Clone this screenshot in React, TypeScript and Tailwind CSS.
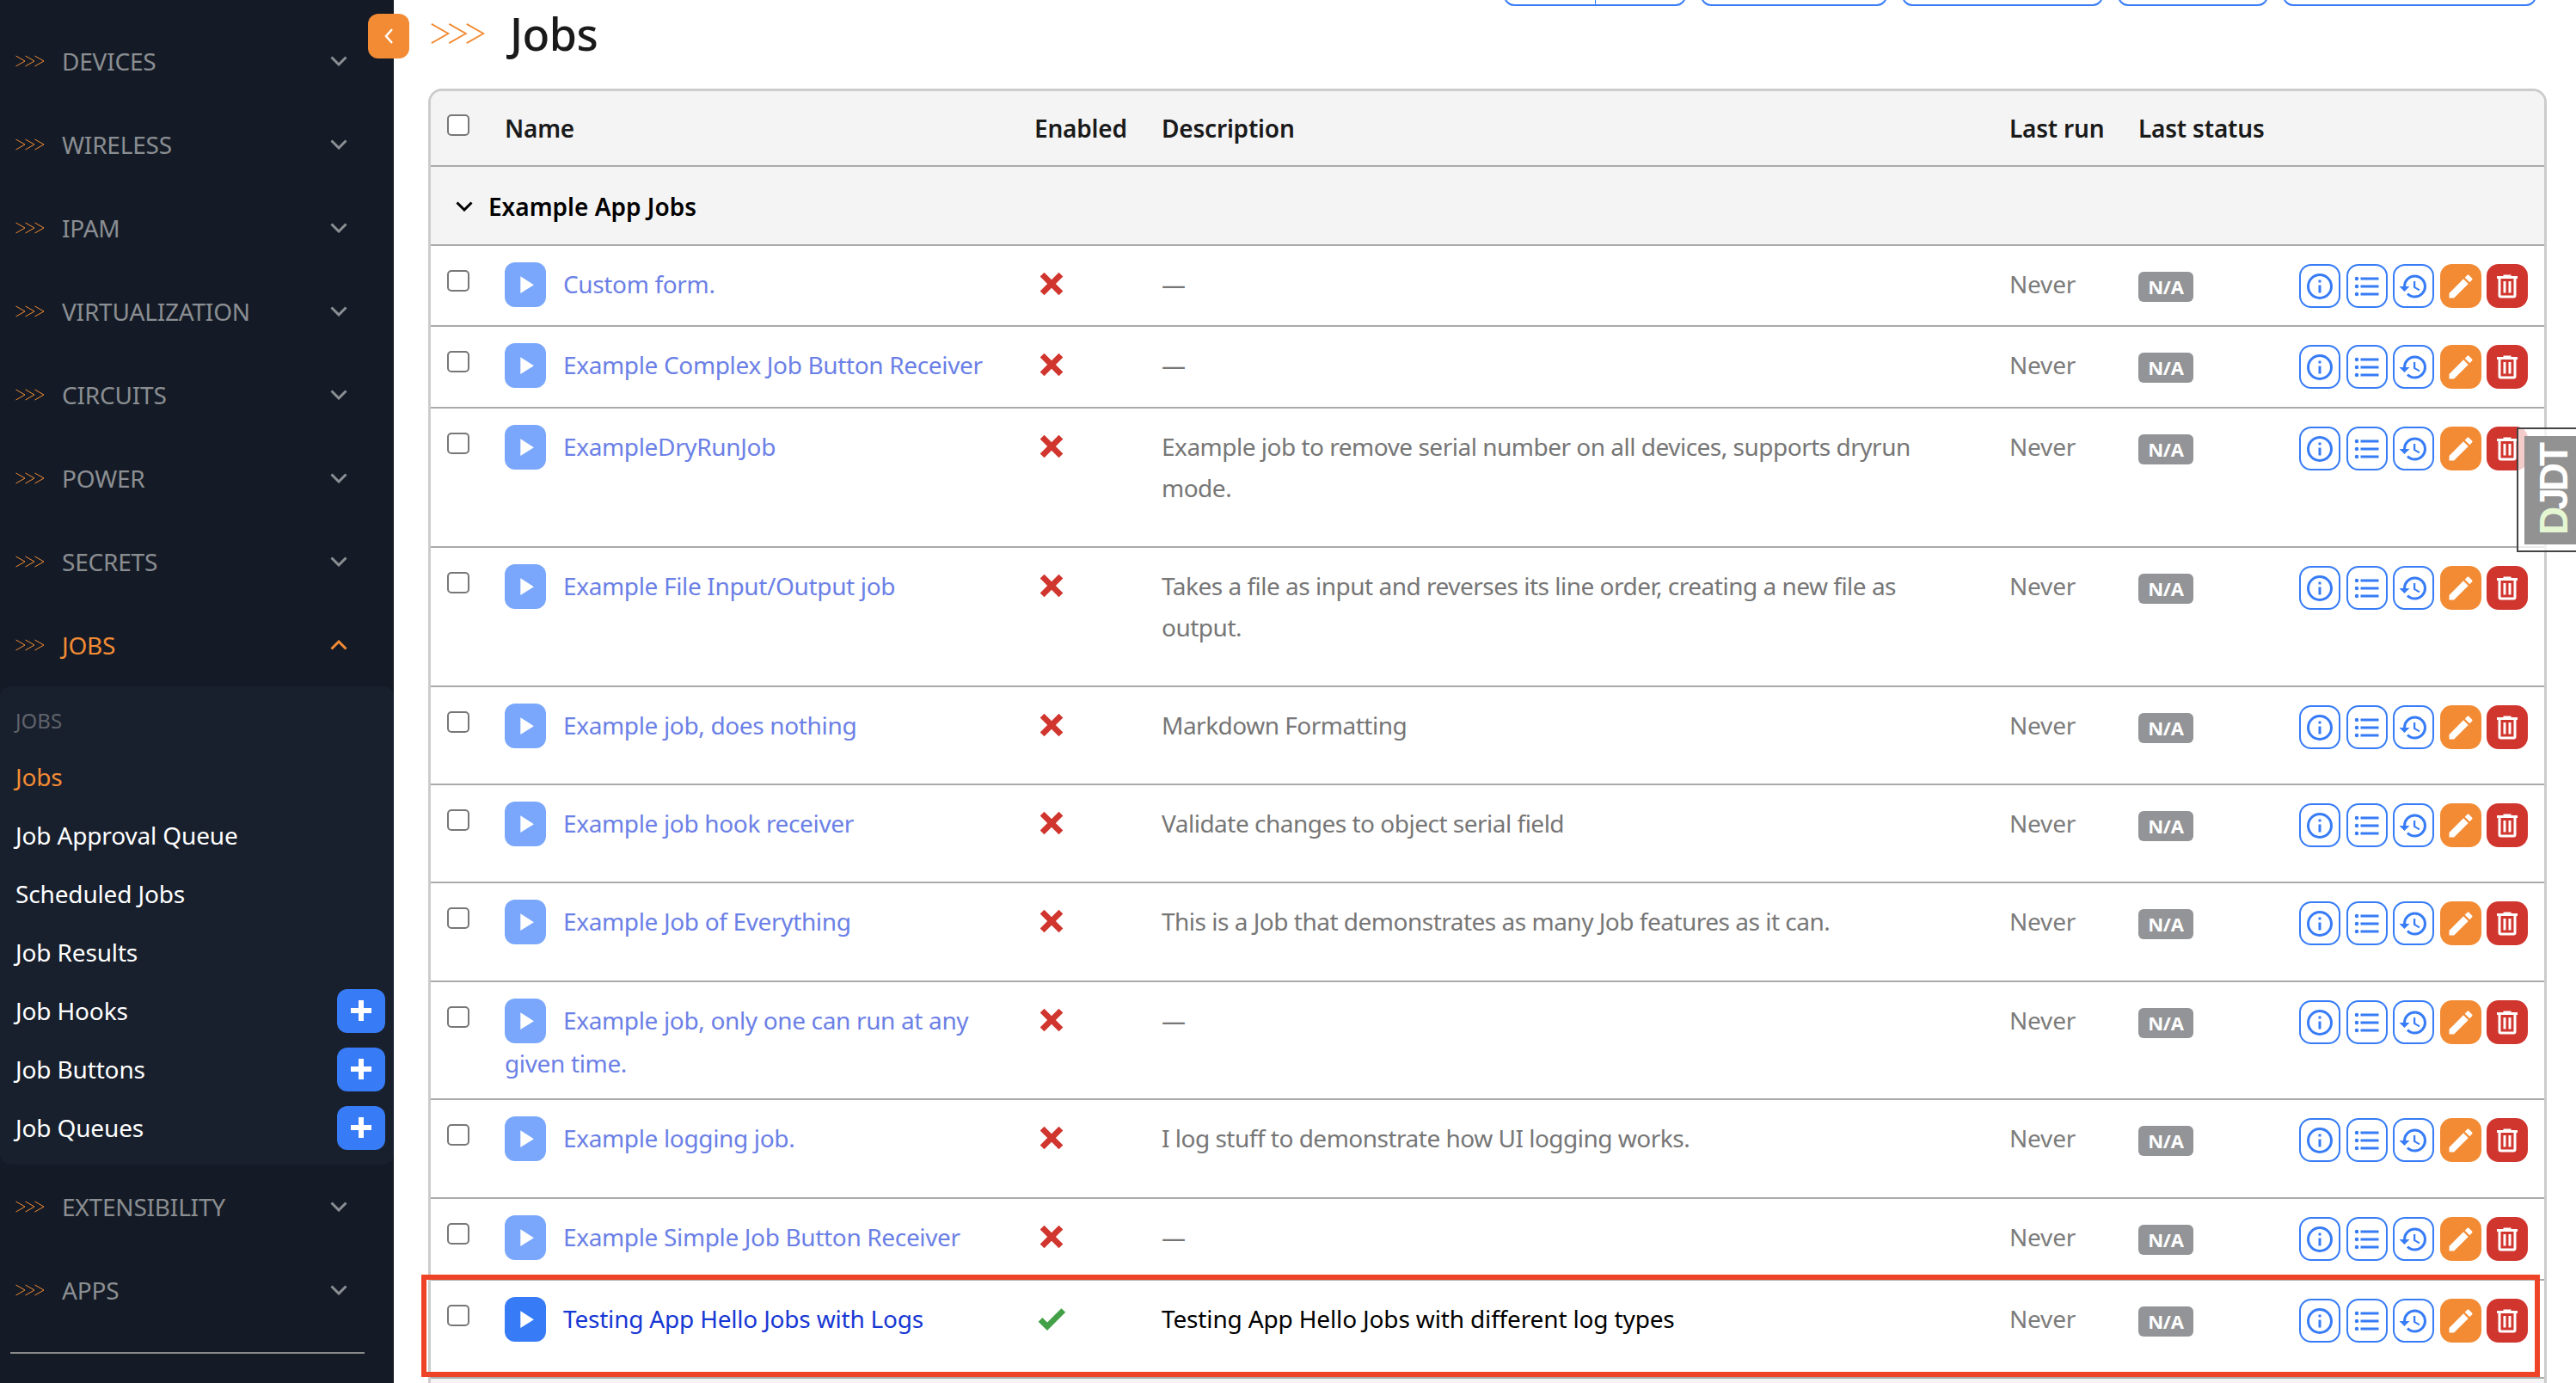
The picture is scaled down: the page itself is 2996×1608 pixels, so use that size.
import React from 'react';

const P = {
  info: 'M11,9H13V7H11M12,20C7.59,20 4,16.41 4,12C4,7.59 7.59,4 12,4C16.41,4 20,7.59 20,12C20,16.41 16.41,20 12,20M12,2A10,10 0 0,0 2,12A10,10 0 0,0 12,22A10,10 0 0,0 22,12A10,10 0 0,0 12,2M11,17H13V11H11V17Z',
  list: 'M7,5H21V7H7V5M7,13V11H21V13H7M4,4.5A1.5,1.5 0 0,1 5.5,6A1.5,1.5 0 0,1 4,7.5A1.5,1.5 0 0,1 2.5,6A1.5,1.5 0 0,1 4,4.5M4,10.5A1.5,1.5 0 0,1 5.5,12A1.5,1.5 0 0,1 4,13.5A1.5,1.5 0 0,1 2.5,12A1.5,1.5 0 0,1 4,10.5M7,19V17H21V19H7M4,16.5A1.5,1.5 0 0,1 5.5,18A1.5,1.5 0 0,1 4,19.5A1.5,1.5 0 0,1 2.5,18A1.5,1.5 0 0,1 4,16.5Z',
  history: 'M13.5,8H12V13L16.28,15.54L17,14.33L13.5,12.25V8M13,3A9,9 0 0,0 4,12H1L4.96,16.03L9,12H6A7,7 0 0,1 13,5A7,7 0 0,1 20,12A7,7 0 0,1 13,19C11.07,19 9.32,18.21 8.06,16.94L6.64,18.36C8.27,20 10.5,21 13,21A9,9 0 0,0 22,12A9,9 0 0,0 13,3',
  pencil: 'M20.71,7.04C21.1,6.65 21.1,6 20.71,5.63L18.37,3.29C18,2.9 17.35,2.9 16.96,3.29L15.12,5.12L18.87,8.87M3,17.25V21H6.75L17.81,9.93L14.06,6.18L3,17.25Z',
  trash: 'M9,3V4H4V6H5V19A2,2 0 0,0 7,21H17A2,2 0 0,0 19,19V6H20V4H15V3H9M7,6H17V19H7V6M9,8V17H11V8H9M13,8V17H15V8H13Z',
  plus: 'M20 14H14V20H10V14H4V10H10V4H14V10H20V14Z',
  play: 'M8,5.14V19.14L19,12.14L8,5.14Z',
  close: 'M20 6.91L17.09 4L12 9.09L6.91 4L4 6.91L9.09 12L4 17.09L6.91 20L12 14.91L17.09 20L20 17.09L14.91 12L20 6.91Z',
  check: 'M9,20.42L2.79,14.21L5.62,11.38L9,14.77L18.88,4.88L21.71,7.71L9,20.42Z',
};

const Icon = ({ d, className }: { d: string; className: string }) => (
  <svg viewBox="0 0 24 24" fill="currentColor" className={className}>
    <path d={d} />
  </svg>
);

const Arrows = ({ className }: { className: string }) => (
  <svg viewBox="0 0 34 14" fill="none" stroke="#f28b34" strokeWidth="1" className={className}>
    <polyline points="0.5,1 11,7 0.5,13" />
    <polyline points="11.5,1 22,7 11.5,13" />
    <polyline points="22.5,1 33,7 22.5,13" />
  </svg>
);

const Chevron = ({ up, className }: { up?: boolean; className: string }) => (
  <svg viewBox="0 0 20 12" fill="none" stroke="currentColor" strokeWidth="3" className={className}>
    <polyline points={up ? '1.5,10.5 10,2 18.5,10.5' : '1.5,1.5 10,10 18.5,1.5'} />
  </svg>
);

const NavItem = ({ label, active }: { label: string; active?: boolean }) => (
  <div className={`h-[97px] flex items-center pl-[18px] pr-[54px] ${active ? 'text-[#f28b34]' : 'text-[#8b8e92]'}`}>
    <Arrows className="w-[34px] h-[14px] shrink-0" />
    <span className="ml-[20px] flex-1 text-[28px] tracking-[-0.2px]">{label}</span>
    <Chevron up={active} className="w-[20px] h-[12px]" />
  </div>
);

const SubItem = ({ label, active, add }: { label: string; active?: boolean; add?: boolean }) => (
  <div className="h-[68px] flex items-center justify-between pl-[18px] pr-[10px]">
    <span className={`text-[28px] tracking-[-0.15px] ${active ? 'text-[#f28b34]' : 'text-white'}`}>{label}</span>
    {add && (
      <span className="w-[56px] h-[51px] rounded-[12px] bg-[#377cf6] text-white flex items-center justify-center">
        <Icon d={P.plus} className="w-[36px] h-[36px]" />
      </span>
    )}
  </div>
);

const Check = () => (
  <input type="checkbox" className="block appearance-none w-[26px] h-[25px] bg-white border-2 border-[#777] rounded-[5px]" />
);

const ActionBtn = ({ d, filled }: { d: string; filled?: string }) => (
  <span className={`w-[48px] h-[51px] rounded-[14px] flex items-center justify-center ${filled ?? 'border-2 border-[#377cf6] text-[#377cf6]'}`}>
    <Icon d={d} className="w-[36px] h-[36px]" />
  </span>
);

type Job = { name: string; desc: string; h: string; enabled?: boolean };

const jobs: Job[] = [
  { name: 'Custom form.', desc: '—', h: 'h-[94px]' },
  { name: 'Example Complex Job Button Receiver', desc: '—', h: 'h-[95px]' },
  { name: 'ExampleDryRunJob', desc: 'Example job to remove serial number on all devices, supports dryrun mode.', h: 'h-[162px]' },
  { name: 'Example File Input/Output job', desc: 'Takes a file as input and reverses its line order, creating a new file as output.', h: 'h-[162px]' },
  { name: 'Example job, does nothing', desc: 'Markdown Formatting', h: 'h-[114px]' },
  { name: 'Example job hook receiver', desc: 'Validate changes to object serial field', h: 'h-[114px]' },
  { name: 'Example Job of Everything', desc: 'This is a Job that demonstrates as many Job features as it can.', h: 'h-[115px]' },
  { name: 'Example job, only one can run at any given time.', desc: '—', h: 'h-[137px]' },
  { name: 'Example logging job.', desc: 'I log stuff to demonstrate how UI logging works.', h: 'h-[115px]' },
  { name: 'Example Simple Job Button Receiver', desc: '—', h: 'h-[95px]' },
  { name: 'Testing App Hello Jobs with Logs', desc: 'Testing App Hello Jobs with different log types', h: 'h-[114px]', enabled: true },
];

const cell = 'align-top p-0 border-b-2 border-[#aaa]';

export default function App() {
  return (
    <div className="relative flex h-[1608px] w-[2996px] overflow-hidden bg-white font-['Noto_Sans',sans-serif] text-[28px] tracking-[-0.2px]">
      {/* Sidebar */}
      <aside className="w-[458px] shrink-0 bg-[#141b26] pt-[22px]">
        {['DEVICES', 'WIRELESS', 'IPAM', 'VIRTUALIZATION', 'CIRCUITS', 'POWER', 'SECRETS'].map(l => (
          <NavItem key={l} label={l} />
        ))}
        <NavItem label="JOBS" active />
        <div className="h-[556px] bg-[#181f2d] rounded-[12px] pt-[22px]">
          <div className="h-[49px] pl-[18px] text-[24px] leading-[36px] tracking-normal text-[#5f636a]">JOBS</div>
          <SubItem label="Jobs" active />
          <SubItem label="Job Approval Queue" />
          <SubItem label="Scheduled Jobs" />
          <SubItem label="Job Results" />
          <SubItem label="Job Hooks" add />
          <SubItem label="Job Buttons" add />
          <SubItem label="Job Queues" add />
        </div>
        <NavItem label="EXTENSIBILITY" />
        <NavItem label="APPS" />
        <div className="mt-[24px] ml-[12px] w-[412px] h-[2px] bg-[#8a8a8a]" />
      </aside>

      {/* Main */}
      <main className="flex-1 min-w-0 pl-[40px]">
        <div className="h-[7px] overflow-hidden flex items-end justify-end gap-[17px] pr-[46px]">
          <div className="w-[212px] h-[40px] shrink-0 flex border-2 border-[#377cf6] rounded-[12px]">
            <span className="w-[105px] border-r border-[#377cf6]" />
          </div>
          <div className="w-[217px] h-[40px] shrink-0 border-2 border-[#377cf6] rounded-[12px]" />
          <div className="w-[234px] h-[40px] shrink-0 border-2 border-[#377cf6] rounded-[12px]" />
          <div className="w-[175px] h-[40px] shrink-0 border-2 border-[#377cf6] rounded-[12px]" />
          <div className="w-[295px] h-[40px] shrink-0 border-2 border-[#377cf6] rounded-[12px]" />
        </div>

        <div className="h-[64px] mb-[32px] flex items-center">
          <Arrows className="w-[71px] h-[26px] -ml-[1px]" />
          <h1 className="ml-[25px] text-[52px] font-medium text-[#1a1a1a] tracking-[-0.5px]">Jobs</h1>
        </div>

        <div className="w-[2464px] border-[3px] border-[#ccc] rounded-[16px] overflow-hidden">
          <table className="w-full table-fixed border-separate border-spacing-0">
            <colgroup>
              <col className="w-[86px]" />
              <col className="w-[616px]" />
              <col className="w-[148px]" />
              <col className="w-[986px]" />
              <col className="w-[150px]" />
              <col className="w-[187px]" />
              <col />
            </colgroup>
            <thead>
              <tr className="h-[88px] bg-[#f4f4f4] text-left text-[#1a1a1a]">
                <th className={`${cell} pl-[19px] pt-[27px]`}><Check /></th>
                <th className={`${cell} pt-[19px] leading-[48px] font-semibold`}>Name</th>
                <th className={`${cell} pt-[19px] leading-[48px] font-semibold`}>Enabled</th>
                <th className={`${cell} pt-[19px] leading-[48px] font-semibold`}>Description</th>
                <th className={`${cell} pt-[19px] leading-[48px] font-semibold`}>Last run</th>
                <th className={`${cell} pt-[19px] leading-[48px] font-semibold`}>Last status</th>
                <th className={cell} />
              </tr>
            </thead>
            <tbody>
              <tr className="h-[92px] bg-[#f4f4f4]">
                <td colSpan={7} className={`${cell} pt-[22px] pl-[29px] leading-[48px]`}>
                  <span className="flex items-center gap-[18px] font-semibold tracking-normal text-black">
                    <Chevron className="w-[20px] h-[12px]" />
                    Example App Jobs
                  </span>
                </td>
              </tr>
              {jobs.map(job => (
                <tr key={job.name} className={job.h}>
                  <td className={`${cell} pl-[19px] pt-[28px]`}><Check /></td>
                  <td className={`${cell} pt-[20px] pr-[36px] leading-[48px] ${job.enabled ? 'text-[#1737d4]' : 'text-[#6b80e6] tracking-[-0.35px]'}`}>
                    <span className={`inline-flex align-middle -my-[4px] -translate-y-[3px] mr-[20px] w-[48px] h-[52px] rounded-[12px] items-center justify-center text-white ${job.enabled ? 'bg-[#377cf6]' : 'bg-[#7aa7fb]'}`}>
                      <Icon d={P.play} className="w-[34px] h-[34px]" />
                    </span>
                    {job.name}
                  </td>
                  <td className={`${cell} pt-[24px]`}>
                    {job.enabled
                      ? <Icon d={P.check} className="w-[40px] h-[40px] text-[#43a047]" />
                      : <Icon d={P.close} className="w-[40px] h-[40px] text-[#d0352e]" />}
                  </td>
                  <td className={`${cell} pt-[20px] pr-[60px] leading-[48px] ${job.enabled ? 'text-black tracking-[-0.15px]' : 'text-[#767676] tracking-[-0.5px]'}`}>{job.desc}</td>
                  <td className={`${cell} pt-[20px] leading-[48px] text-[#7c7c7c]`}>Never</td>
                  <td className={`${cell} pt-[30px]`}>
                    <span className="flex w-[64px] h-[35px] rounded-[6px] bg-[#939497] text-white text-[22px] font-bold items-center justify-center">N/A</span>
                  </td>
                  <td className={`${cell} pt-[21px]`}>
                    <div className="flex gap-[6.5px]">
                      <ActionBtn d={P.info} />
                      <ActionBtn d={P.list} />
                      <ActionBtn d={P.history} />
                      <ActionBtn d={P.pencil} filled="bg-[#f28b34] text-white" />
                      <ActionBtn d={P.trash} filled="bg-[#d0352e] text-white" />
                    </div>
                  </td>
                </tr>
              ))}
              <tr className="h-[92px] bg-[#f4f4f4]"><td colSpan={7} /></tr>
            </tbody>
          </table>
        </div>
      </main>

      {/* Sidebar collapse toggle */}
      <button className="absolute left-[428px] top-[16px] w-[48px] h-[52px] rounded-[12px] bg-[#f28b34] text-white flex items-center justify-center">
        <svg viewBox="0 0 12 20" fill="none" stroke="currentColor" strokeWidth="2.5" className="w-[12px] h-[20px]">
          <polyline points="10,2 3,10 10,18" />
        </svg>
      </button>

      {/* Red highlight around the new job */}
      <div className="absolute left-[490px] top-[1482px] w-[2464px] h-[119px] border-[6px] border-[#ee4327]" />

      {/* Debug toolbar handle */}
      <div className="absolute right-0 top-[497px] w-[69px] h-[145px] border-2 border-r-0 border-[#444] bg-white/75 pl-[7px] pt-[8px] pb-[7px]">
        <div className="h-full bg-[#8c8c8c]/95 flex items-center justify-center pl-[8px]">
          <span className="block -rotate-90 font-['Liberation_Sans',sans-serif] font-bold text-[46px] leading-none tracking-[-4px] text-white">
            <span className="text-[#e4f7d2]">D</span>JDT
          </span>
        </div>
      </div>
    </div>
  );
}
